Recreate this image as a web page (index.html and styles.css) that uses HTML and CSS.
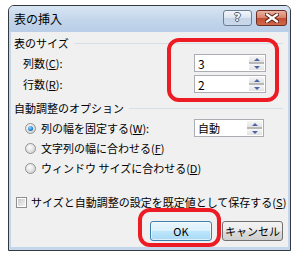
FILE: index.html
```html
<!DOCTYPE html>
<html lang="ja">
<head>
    <meta charset="UTF-8">
    <title>表の挿入</title>
    <link rel="stylesheet" href="styles.css">
</head>
<body>
<div class="stage">
    <div class="window">
        <div class="titlebar">
            <span class="title">表の挿入</span>
            <div class="caption-btns">
                <div class="cap-btn help"><span>?</span></div>
                <div class="cap-btn close">
                    <svg width="14" height="10" viewBox="0 0 14 10">
                        <path d="M2 1.5 L12 8.5 M12 1.5 L2 8.5" stroke="#5a2419" stroke-width="4.2" stroke-linecap="square"/>
                        <path d="M2 1.5 L12 8.5 M12 1.5 L2 8.5" stroke="#fff" stroke-width="2.2" stroke-linecap="square"/>
                    </svg>
                </div>
            </div>
        </div>

        <div class="content">
            <div class="group-head"><span>表のサイズ</span></div>
            <div class="field-row">
                <span>列数(<u>C</u>):</span>
                <div class="spinbox">
                    <span class="value">3</span>
                    <div class="spin"><div class="spin-up"></div><div class="spin-down"></div></div>
                </div>
            </div>
            <div class="field-row second">
                <span>行数(<u>R</u>):</span>
                <div class="spinbox">
                    <span class="value">2</span>
                    <div class="spin"><div class="spin-up"></div><div class="spin-down"></div></div>
                </div>
            </div>

            <div class="group-head second"><span>自動調整のオプション</span></div>
            <div class="radio-row first">
                <div class="radio-item"><span class="radio on"></span><span>列の幅を固定する(<u>W</u>):</span></div>
                <div class="spinbox combo">
                    <span class="value">自動</span>
                    <div class="spin"><div class="spin-up"></div><div class="spin-down"></div></div>
                </div>
            </div>
            <div class="radio-row">
                <div class="radio-item"><span class="radio"></span><span>文字列の幅に合わせる(<u>F</u>)</span></div>
            </div>
            <div class="radio-row">
                <div class="radio-item"><span class="radio"></span><span>ウィンドウ サイズに合わせる(<u>D</u>)</span></div>
            </div>

            <div class="check-row">
                <span class="check"></span>
                <span>サイズと自動調整の設定を既定値として保存する(<u>S</u>)</span>
            </div>

            <div class="btn-row">
                <div class="btn default">OK</div>
                <div class="btn">キャンセル</div>
            </div>
        </div>
    </div>

    <div class="mark mark-size"></div>
    <div class="mark mark-ok"></div>
</div>
</body>
</html>
```

FILE: styles.css
```css
body {
    margin: 0;
    background: #fff;
    font-family: "Noto Sans CJK JP", "Noto Sans", sans-serif;
    color: #000;
}

.stage {
    position: relative;
    width: 299px;
    height: 256px;
    padding: 5px 0 0 8px;
    box-sizing: border-box;
}

.window {
    width: 283px;
    height: 246px;
    box-sizing: border-box;
    border: 1px solid #353a40;
    border-radius: 6px 6px 0 0;
    background: #c3d6ec;
    padding: 0 2px 3px;
    display: flex;
    flex-direction: column;
}

.titlebar {
    height: 26px;
    flex: none;
    margin: 0 -2px;
    padding: 0 3px 0 5px;
    display: flex;
    justify-content: space-between;
    background: linear-gradient(#d8e5f3, #c0d4ea 60%, #b9cfe7);
    border-radius: 5px 5px 0 0;
}

.title {
    font-size: 12px;
    line-height: 26px;
}

.caption-btns {
    display: flex;
    gap: 4px;
    margin-top: 4px;
}

.cap-btn {
    height: 16px;
    box-sizing: border-box;
    border-radius: 3px;
    display: flex;
    align-items: center;
    justify-content: center;
}

.help {
    width: 29px;
    border: 1px solid #6c7d93;
    background: linear-gradient(#f3f6fa, #dbe4ef 50%, #c5d4e6 51%, #c9d8ea);
}

.help span {
    font-family: "DejaVu Sans", sans-serif;
    font-weight: bold;
    font-size: 11px;
    line-height: 12px;
    color: #fff;
    text-shadow: 1px 0 #4b5b72, -1px 0 #4b5b72, 0 1px #4b5b72, 0 -1px #4b5b72;
}

.close {
    width: 31px;
    border: 1px solid #6e2b1f;
    background: linear-gradient(#eab2a2, #d7826b 50%, #c64a30 51%, #cf6a4c);
}

.content {
    flex: 1;
    background: #f0f0f0;
    font-size: 11px;
    display: flex;
    flex-direction: column;
}

.group-head {
    height: 18px;
    margin-top: 2px;
    padding: 0 5px 0 3px;
    display: flex;
    align-items: center;
    gap: 5px;
}

.group-head::after {
    content: "";
    flex: 1;
    height: 1px;
    background: #d5dfe7;
}

.group-head.second {
    margin-top: 6px;
}

.field-row {
    height: 18px;
    margin-top: 2px;
    padding: 0 22px 0 12px;
    display: flex;
    align-items: center;
    justify-content: space-between;
}

.field-row.second {
    margin-top: 3px;
}

.spinbox {
    width: 72px;
    height: 18px;
    box-sizing: border-box;
    border: 1px solid #abadb3;
    background: #fff;
    display: flex;
    align-items: center;
    justify-content: space-between;
}

.spinbox .value {
    padding-left: 3px;
    font-size: 12px;
}

.spinbox.combo {
    width: 70px;
}

.spinbox.combo .value {
    font-size: 11px;
}

.spin {
    width: 15px;
    height: 14px;
    margin-right: 1px;
    display: flex;
    flex-direction: column;
    justify-content: space-between;
    background: #b8b8b8;
}

.spin-up, .spin-down {
    height: 6px;
    display: flex;
    align-items: center;
    justify-content: center;
    background: linear-gradient(#f6f6f6, #e2e2e2);
}

.spin-up::after, .spin-down::after {
    content: "";
    border-left: 3px solid transparent;
    border-right: 3px solid transparent;
}

.spin-up::after {
    border-bottom: 3px solid #4d64a8;
}

.spin-down::after {
    border-top: 3px solid #4d64a8;
}

.radio-row {
    height: 20px;
    padding: 0 24px 0 14px;
    display: flex;
    align-items: center;
    justify-content: space-between;
}

.radio-row.first {
    margin-top: 1px;
}

.radio-item {
    display: flex;
    align-items: center;
    gap: 5px;
}

.radio {
    width: 11px;
    height: 11px;
    box-sizing: border-box;
    border-radius: 50%;
    border: 1px solid #929292;
    background: radial-gradient(circle at 40% 35%, #fdfdfd, #d6d6d6 75%);
    display: flex;
    align-items: center;
    justify-content: center;
    flex: none;
}

.radio.on::after {
    content: "";
    width: 5px;
    height: 5px;
    border-radius: 50%;
    background: radial-gradient(circle at 40% 35%, #9ad9ff, #1f80cf 60%, #0d3f7c);
}

.check-row {
    height: 18px;
    margin-top: 15px;
    padding-left: 5px;
    display: flex;
    align-items: center;
    gap: 4px;
}

.check {
    width: 11px;
    height: 11px;
    box-sizing: border-box;
    border: 1px solid #8e8f8f;
    padding: 1px;
    background: #fff;
    flex: none;
}

.check::after {
    content: "";
    display: block;
    width: 100%;
    height: 100%;
    background: linear-gradient(135deg, #c9c9c9, #f4f4f4);
}

.btn-row {
    margin-top: 10px;
    padding-right: 5px;
    display: flex;
    justify-content: flex-end;
    gap: 10px;
}

.btn {
    width: 61px;
    height: 20px;
    box-sizing: border-box;
    border: 1px solid #707070;
    border-radius: 3px;
    background: linear-gradient(#f2f2f2, #ebebeb 50%, #dddddd 51%, #cfcfcf);
    display: flex;
    align-items: center;
    justify-content: center;
    font-size: 11px;
}

.btn.default {
    width: 62px;
    border-color: #3c7fb1;
    background: linear-gradient(#eaf6fd, #d9f0fc 50%, #bee6fd 51%, #a7d9f5);
    box-shadow: inset 0 0 0 1px rgba(255, 255, 255, 0.6);
}

.mark {
    position: absolute;
    box-sizing: border-box;
    border: 4px solid #ed1c24;
    border-radius: 12px;
}

.mark-size {
    left: 167px;
    top: 38px;
    width: 112px;
    height: 64px;
}

.mark-ok {
    left: 138px;
    top: 208px;
    width: 83px;
    height: 39px;
}
```
